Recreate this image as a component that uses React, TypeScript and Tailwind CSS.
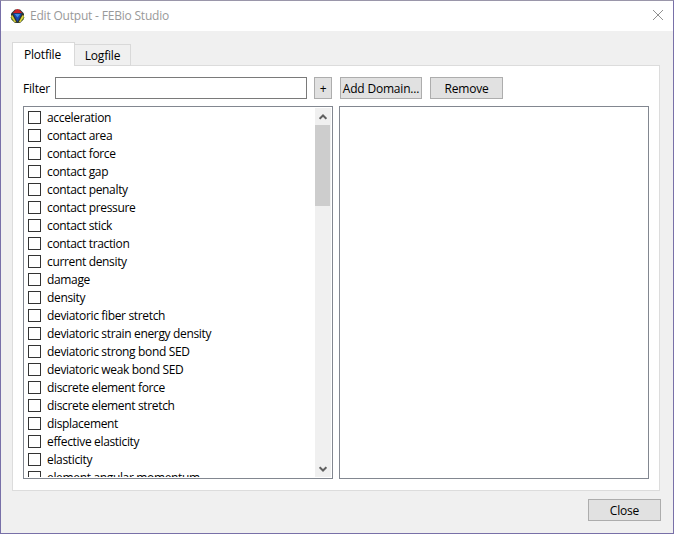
import React from "react";

const items: string[] = [
  "acceleration",
  "contact area",
  "contact force",
  "contact gap",
  "contact penalty",
  "contact pressure",
  "contact stick",
  "contact traction",
  "current density",
  "damage",
  "density",
  "deviatoric fiber stretch",
  "deviatoric strain energy density",
  "deviatoric strong bond SED",
  "deviatoric weak bond SED",
  "discrete element force",
  "discrete element stretch",
  "displacement",
  "effective elasticity",
  "elasticity",
  "element angular momentum",
];

function Logo() {
  return (
    <svg width="15" height="15" viewBox="0 0 15 15" className="shrink-0">
      <path d="M5 .5H10L14 4.5V10L10 14H5L1 10V4.5Z" fill="#2c3330" />
      <path d="M2.8 4 5.5 1 7.5 0 9.5 1 12.2 4Z" fill="#cb2027" />
      <path d="M3.2 4.6h8.6L7.5 13Z" fill="#1746b0" />
      <path d="M4.8 5h5.4L7.5 8.6Z" fill="#3f8fe0" />
      <path d="M1.2 6.5 2.5 6.2 6.4 13.6 4.4 13 1.2 9.8Z" fill="#d8cf35" />
      <path d="M13.8 6.5 12.5 6.2 8.6 13.6l2-.6 3.2-3.2Z" fill="#e3d63b" />
      <path d="M.8 8.2 3.6 12.2M14.2 8.2 11.4 12.2" stroke="#3c6b35" strokeWidth=".8" />
    </svg>
  );
}

function Chevron({ down = false }: { down?: boolean }) {
  return (
    <svg width="8" height="6" viewBox="0 0 8 6" className={down ? "rotate-180" : ""}>
      <path d="M.6 4.9 4 1.5 7.4 4.9" fill="none" stroke="#606060" strokeWidth="2" />
    </svg>
  );
}

function Button({ className, children }: { className: string; children: React.ReactNode }) {
  return (
    <button className={`flex h-[22px] shrink-0 items-center justify-center whitespace-nowrap border border-[#adadad] bg-[#e1e1e1] pt-[2px] ${className}`}>
      {children}
    </button>
  );
}

export default function App() {
  return (
    <div className="flex h-[534px] w-[674px] flex-col border border-[#7870a8] border-t-[#9a96aa] bg-[#f0f0f0] font-['Open_Sans','Noto_Sans',sans-serif] text-[12px] leading-[18px] tracking-[-0.2px] text-black">
      <header className="flex h-[30px] shrink-0 items-center bg-white pr-[9px] pl-[9px]">
        <Logo />
        <span className="ml-[5px] text-[#999999]">Edit Output - FEBio Studio</span>
        <svg width="12" height="12" viewBox="0 0 12 12" className="mb-[2px] ml-auto">
          <path d="M1 1 11 11M11 1 1 11" stroke="#909090" strokeWidth="1" />
        </svg>
      </header>

      <main className="flex flex-col px-[11px] pt-[11px]">
        <div className="z-10 -mb-px flex h-6 items-end">
          <div className="flex h-6 w-[63px] items-center justify-center border border-b-0 border-[#d9d9d9] bg-white pr-[2px] pt-px">Plotfile</div>
          <div className="flex h-[22px] w-14 items-center justify-center border border-l-0 border-[#d9d9d9] pt-[2px]">Logfile</div>
        </div>
        <section className="h-[426px] w-[648px] border border-[#dcdcdc] bg-white px-[10px] pt-[11px]">
          <div className="flex h-[22px] items-center">
            <label className="w-8 shrink-0 pt-[2px]">Filter</label>
            <input className="h-[22px] w-[252px] border border-[#7a7a7a] bg-white outline-none" />
            <Button className="ml-[7px] w-[18px]">+</Button>
            <Button className="ml-2 w-[82px]">Add Domain...</Button>
            <Button className="ml-2 w-[73px]">Remove</Button>
          </div>
          <div className="mt-[7px] flex gap-[6px]">
            <div className="flex h-[373px] w-[310px] border border-[#828790] p-px">
              <ul className="min-w-0 flex-1 overflow-hidden tracking-[-0.34px]">
                {items.map((item) => (
                  <li key={item} className="flex h-[18px] items-start pl-[3px]">
                    <span className="mt-[3px] h-[13px] w-[13px] shrink-0 border border-[#333333] bg-white" />
                    <span className="mt-px ml-[6px] whitespace-nowrap">{item}</span>
                  </li>
                ))}
              </ul>
              <div className="flex w-4 flex-col bg-[#f0f0f0]">
                <div className="flex h-[17px] w-[15px] items-center justify-center"><Chevron /></div>
                <div className="h-[81px] w-[15px] bg-[#cdcdcd]" />
                <div className="mt-auto flex h-[17px] w-[15px] items-center justify-center"><Chevron down /></div>
              </div>
            </div>
            <div className="h-[373px] w-[310px] border border-[#828790]" />
          </div>
        </section>
        <div className="flex justify-end pt-2 pr-px">
          <Button className="w-[73px]">Close</Button>
        </div>
      </main>
    </div>
  );
}
